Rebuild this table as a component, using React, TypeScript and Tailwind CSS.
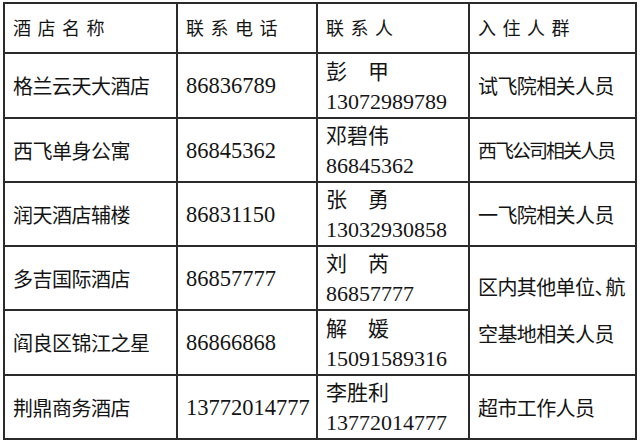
const FONT = "font-['Liberation_Serif','Noto_Sans_CJK_SC',serif]";

type Row = {
  hotel: string;
  phone: string;
  name: string;
  mobile: string;
};

const ROWS: Row[] = [
  { hotel: "格兰云天大酒店", phone: "86836789", name: "彭　甲", mobile: "13072989789" },
  { hotel: "西飞单身公寓", phone: "86845362", name: "邓碧伟", mobile: "86845362" },
  { hotel: "润天酒店辅楼", phone: "86831150", name: "张　勇", mobile: "13032930858" },
  { hotel: "多吉国际酒店", phone: "86857777", name: "刘　芮", mobile: "86857777" },
  { hotel: "阎良区锦江之星", phone: "86866868", name: "解　媛", mobile: "15091589316" },
  { hotel: "荆鼎商务酒店", phone: "13772014777", name: "李胜利", mobile: "13772014777" },
];

const HEIGHTS = ["h-[65px]", "h-[64px]", "h-[64px]", "h-[64px]", "h-[65px]", "h-[63px]"];

const cell = "border-2 border-[#2b2b2b] pl-[8px] align-middle";

function Guests({ index }: { index: number }) {
  if (index === 0) return <span>试飞院相关人员</span>;
  // squeezed to fit the column, like the source document
  if (index === 1) return <span className="text-[19px] tracking-[-2px]">西飞公司相关人员</span>;
  if (index === 2) return <span>一飞院相关人员</span>;
  if (index === 5) return <span>超市工作人员</span>;
  return null;
}

export default function App() {
  return (
    <div className={`w-[640px] h-[444px] bg-white pl-[3px] pt-[2px] text-[#141414] ${FONT}`}>
      <table className="table-fixed border-collapse w-[632px]">
        <colgroup>
          <col className="w-[173px]" />
          <col className="w-[140px]" />
          <col className="w-[152px]" />
          <col className="w-[167px]" />
        </colgroup>
        <thead>
          <tr className="h-[50px]">
            {["酒店名称", "联系电话", "联系人", "入住人群"].map((h) => (
              <th
                key={h}
                className={`${cell} text-left font-normal text-[18px] tracking-[6.5px] pt-[2px]`}
              >
                {h}
              </th>
            ))}
          </tr>
        </thead>
        <tbody>
          {ROWS.map((r, i) => (
            <tr key={r.hotel} className={HEIGHTS[i]}>
              <td className={`${cell} text-[20px] tracking-[-0.5px] pt-[3px]`}>{r.hotel}</td>
              <td className={`${cell} text-[22.5px] pt-[1px]`}>{r.phone}</td>
              <td className={`${cell} pt-[2px]`}>
                <div className="text-[21px] leading-[30px]">{r.name}</div>
                <div className="text-[22px] leading-[30px]">{r.mobile}</div>
              </td>
              {i === 3 ? (
                <td rowSpan={2} className={`${cell} text-[20px] tracking-[-0.6px] leading-[47px] pt-[3px]`}>
                  <div className="whitespace-nowrap">
                    区内其他单位<span className="tracking-[-9px]">、</span>航
                  </div>
                  <div className="whitespace-nowrap">空基地相关人员</div>
                </td>
              ) : i === 4 ? null : (
                <td className={`${cell} text-[20px] tracking-[-0.6px] pt-[3px] whitespace-nowrap`}>
                  <Guests index={i} />
                </td>
              )}
            </tr>
          ))}
        </tbody>
      </table>
    </div>
  );
}
